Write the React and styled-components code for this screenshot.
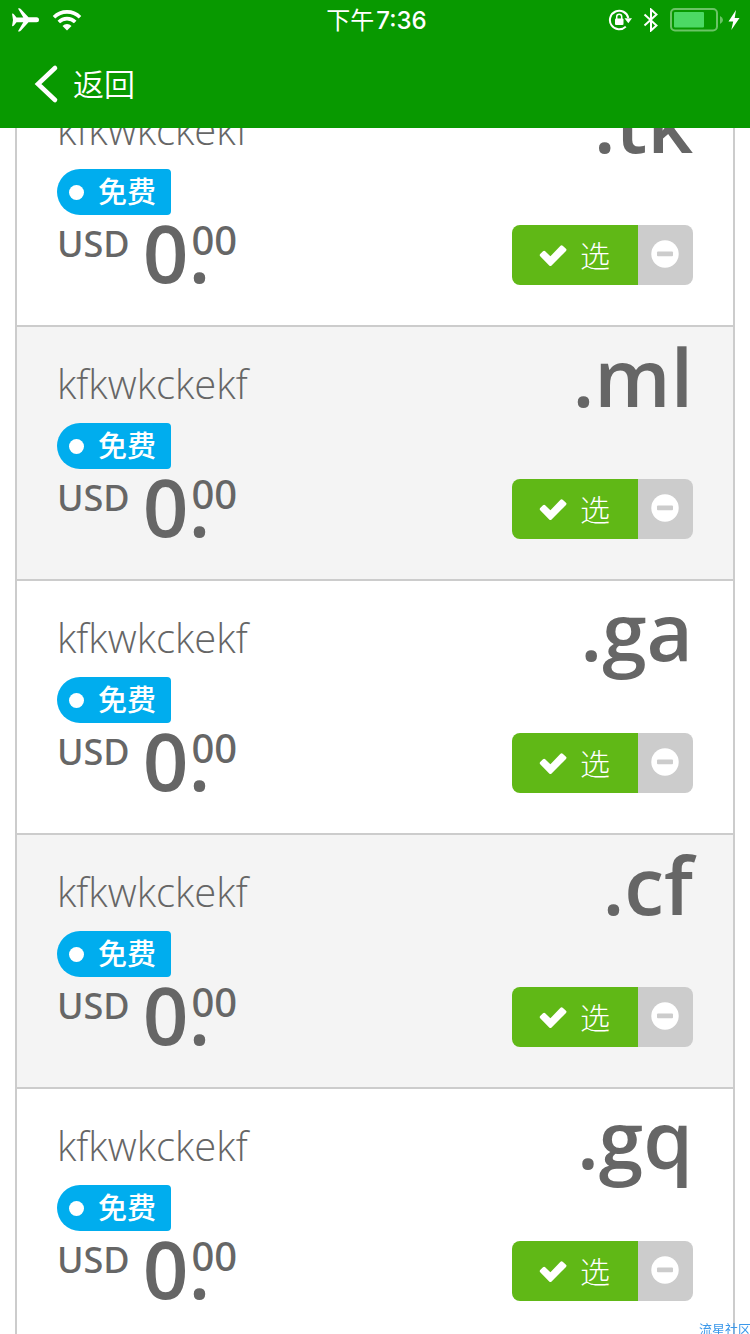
import React from "react";
import styled, { createGlobalStyle } from "styled-components";

const GlobalStyle = createGlobalStyle`
  * {
    box-sizing: border-box;
  }
  body {
    margin: 0;
    background: #ffffff;
    color: #666666;
    font-family: "Open Sans", "Noto Sans CJK SC", sans-serif;
  }
  button {
    border: none;
    margin: 0;
    padding: 0;
    font: inherit;
    cursor: pointer;
  }
`;

const Page = styled.div`
  height: 100vh;
  overflow: hidden;
`;

const Header = styled.header`
  position: fixed;
  top: 0;
  left: 0;
  right: 0;
  z-index: 2;
  background: #089900;
  color: #ffffff;
`;

const StatusBar = styled.div`
  display: grid;
  grid-template-columns: 1fr auto 1fr;
  align-items: center;
  height: 40px;
  padding: 0 10px 0 11px;
`;

const StatusGroup = styled.div`
  display: flex;
  align-items: center;
  justify-content: ${props => (props.$end ? "flex-end" : "flex-start")};
  gap: ${props => props.$gap}px;
  svg {
    display: block;
  }
`;

const Time = styled.time`
  padding: 2px 0 0 2px;
  font-family: Inter, "Noto Sans CJK SC", sans-serif;
  font-size: 24px;
  font-weight: 500;
  line-height: 38px;
`;

const Period = styled.span`
  margin-right: 2px;
  font-weight: 400;
`;

const NavBar = styled.nav`
  display: flex;
  align-items: center;
  height: 88px;
  padding: 0 34px;
`;

const BackButton = styled.button`
  display: flex;
  align-items: center;
  gap: 14px;
  background: none;
  color: inherit;
  font-size: 31px;
  font-weight: 350;
  line-height: 44px;
`;

const Main = styled.main`
  padding: 71px 15px 0;
`;

const Results = styled.ul`
  list-style: none;
  margin: 0;
  padding: 0;
  border: 2px solid #cccccc;
`;

const Row = styled.li`
  display: flex;
  align-items: flex-start;
  justify-content: space-between;
  padding: 0 40px 36px;
  border-bottom: 2px solid #cccccc;
  &:nth-child(even) {
    background: #f4f4f4;
  }
`;

const Info = styled.div`
  padding-top: 29px;
`;

const DomainName = styled.div`
  margin-bottom: 11px;
  font-size: 40px;
  font-weight: 300;
  line-height: 56px;
`;

const Tag = styled.div`
  display: inline-flex;
  align-items: center;
  gap: 14px;
  height: 46px;
  padding: 0 15px 0 12px;
  border-radius: 23px 4px 4px 23px;
  background: #00adee;
  color: #ffffff;
  font-size: 29px;
  font-weight: 500;
  line-height: 46px;
  vertical-align: top;
  &::before {
    content: "";
    width: 15px;
    height: 15px;
    border-radius: 50%;
    background: #ffffff;
  }
`;

const Price = styled.div`
  display: flex;
  align-items: flex-start;
  font-family: "Noto Sans", "Open Sans", sans-serif;
  font-weight: 500;
`;

const Currency = styled.span`
  margin-right: 13px;
  font-size: 36px;
  line-height: 58px;
`;

const Whole = styled.span`
  font-family: "Open Sans", sans-serif;
  font-size: 80px;
  font-weight: 600;
  line-height: 74px;
`;

/* the cents sit above the decimal point, in the same cell */
const Fraction = styled.span`
  display: grid;
  > * {
    grid-area: 1 / 1;
  }
`;

const Cents = styled.span`
  padding-left: 3px;
  font-size: 40px;
  line-height: 50px;
`;

const Actions = styled.div`
  display: flex;
  flex-direction: column;
  align-items: flex-end;
`;

const Extension = styled.div`
  margin-bottom: 54px;
  font-size: 80px;
  font-weight: 600;
  line-height: 98px;
`;

const ButtonGroup = styled.div`
  display: flex;
  height: 60px;
  border-radius: 8px;
  overflow: hidden;
`;

const SelectButton = styled.button`
  display: flex;
  align-items: center;
  gap: 12px;
  padding: 2px 28px 0 27px;
  background: #60b816;
  color: #ffffff;
  font-size: 30px;
  font-weight: 300;
  line-height: 58px;
`;

const RemoveButton = styled.button`
  display: flex;
  align-items: center;
  justify-content: center;
  width: 55px;
  padding: 0 1px 3px 0;
  background: #cccccc;
`;

const Watermark = styled.div`
  position: fixed;
  right: -1px;
  bottom: -4px;
  z-index: 3;
  color: #3b98ea;
  font-size: 13px;
  line-height: 18px;
  white-space: nowrap;
`;

const PlaneIcon = () => (
  <svg width="28" height="26" viewBox="0 0 28 26" fill="#fff" aria-hidden="true">
    <path d="M1 6.500q1.500 0 2.300 1.200L5.500 10.500h6.800L7 1.500Q8.500.500 10 2.200L17.500 10.300H25.500a2.500 2.500 0 0 1 0 5H17.500L10 23.500Q8.500 25.200 7 24.200l5.300-9H5.500L3.300 18Q2.500 19.200 1 19.200l1-6.300z" />
  </svg>
);

const WifiIcon = () => (
  <svg width="30" height="22" viewBox="0 0 30 22" aria-hidden="true">
    <g fill="none" stroke="#fff" strokeWidth="3.600">
      <path d="M2 8.200a18.500 18.500 0 0 1 26 0" />
      <path d="M6.800 13a11.700 11.700 0 0 1 16.400 0" />
    </g>
    <path d="M15 21.500l-4.500-4.600a6.500 6.500 0 0 1 9 0z" fill="#fff" />
  </svg>
);

const RotationLockIcon = () => (
  <svg width="24" height="24" viewBox="0 0 24 24" aria-hidden="true">
    <path d="M17.800 18.600A9.300 9.300 0 1 1 20.300 10" fill="none" stroke="#fff" strokeWidth="2" />
    <path d="M16.500 10.300H24l-3.700 5z" fill="#fff" />
    <rect x="7" y="10.500" width="8.500" height="6.500" rx="1" fill="#fff" />
    <path d="M8.700 11V8.800a2.500 2.500 0 0 1 5 0V11" fill="none" stroke="#fff" strokeWidth="1.500" />
  </svg>
);

const BluetoothIcon = () => (
  <svg width="16" height="24" viewBox="0 0 16 24" aria-hidden="true">
    <path d="M1.500 6.500l12 11L8 22.500v-21l5.500 5-12 11" fill="none" stroke="#fff" strokeWidth="2" />
  </svg>
);

const BatteryIcon = () => (
  <svg width="54" height="24" viewBox="0 0 54 24" aria-hidden="true">
    <rect x="1" y="1" width="46" height="21.500" rx="4" fill="none" stroke="#6bc466" strokeWidth="2" />
    <rect x="4" y="4" width="30" height="15.500" rx="1" fill="#4cd964" />
    <path d="M50 8q3 1.500 3 4t-3 4z" fill="#6bc466" />
  </svg>
);

const BoltIcon = () => (
  <svg width="12" height="20" viewBox="0 0 12 20" fill="#fff" aria-hidden="true">
    <path d="M8 0L.500 11.500h4.700L3.300 20 11.500 8H6.700z" />
  </svg>
);

const ChevronIcon = () => (
  <svg width="25" height="40" viewBox="0 0 25 40" aria-hidden="true">
    <path d="M21 4L4 20l17 16" fill="none" stroke="#fff" strokeWidth="4.600" strokeLinecap="round" strokeLinejoin="miter" />
  </svg>
);

const CheckIcon = () => (
  <svg width="29" height="24" viewBox="0 0 29 24" aria-hidden="true">
    <path
      d="M1.200 12.300q-1-1.100 0-2.200l2.800-2.800q1.100-1 2.200 0l5.200 5L21.500 1.700q1.100-1 2.200 0l3.300 3q1 1.100 0 2.200L12.600 21.600q-1.200 1-2.400 0z"
      fill="#fff"
    />
  </svg>
);

const MinusIcon = () => (
  <svg width="28" height="28" viewBox="0 0 28 28" aria-hidden="true">
    <circle cx="14" cy="14" r="13.700" fill="#fff" />
    <rect x="6" y="11.600" width="16" height="4.600" rx="1" fill="#ccc" />
  </svg>
);

const domains = [
  { name: "kfkwkckekf", extension: ".tk" },
  { name: "kfkwkckekf", extension: ".ml" },
  { name: "kfkwkckekf", extension: ".ga" },
  { name: "kfkwkckekf", extension: ".cf" },
  { name: "kfkwkckekf", extension: ".gq" }
];

const DomainRow = ({ name, extension }) => (
  <Row>
    <Info>
      <DomainName>{name}</DomainName>
      <Tag>免费</Tag>
      <Price>
        <Currency>USD</Currency>
        <Whole>0</Whole>
        <Fraction>
          <Whole>.</Whole>
          <Cents>00</Cents>
        </Fraction>
      </Price>
    </Info>
    <Actions>
      <Extension>{extension}</Extension>
      <ButtonGroup>
        <SelectButton type="button">
          <CheckIcon />
          选
        </SelectButton>
        <RemoveButton type="button" aria-label={`移除 ${name}${extension}`}>
          <MinusIcon />
        </RemoveButton>
      </ButtonGroup>
    </Actions>
  </Row>
);

export default () => (
  <Page>
    <GlobalStyle />
    <Header>
      <StatusBar>
        <StatusGroup $gap={13}>
          <PlaneIcon />
          <WifiIcon />
        </StatusGroup>
        <Time>
          <Period>下午</Period>7:36
        </Time>
        <StatusGroup $end $gap={11}>
          <RotationLockIcon />
          <BluetoothIcon />
          <StatusGroup $gap={4}>
            <BatteryIcon />
            <BoltIcon />
          </StatusGroup>
        </StatusGroup>
      </StatusBar>
      <NavBar>
        <BackButton type="button">
          <ChevronIcon />
          返回
        </BackButton>
      </NavBar>
    </Header>
    <Main>
      <Results>
        {domains.map(domain => (
          <DomainRow key={domain.extension} {...domain} />
        ))}
      </Results>
    </Main>
    <Watermark>流星社区</Watermark>
  </Page>
);
